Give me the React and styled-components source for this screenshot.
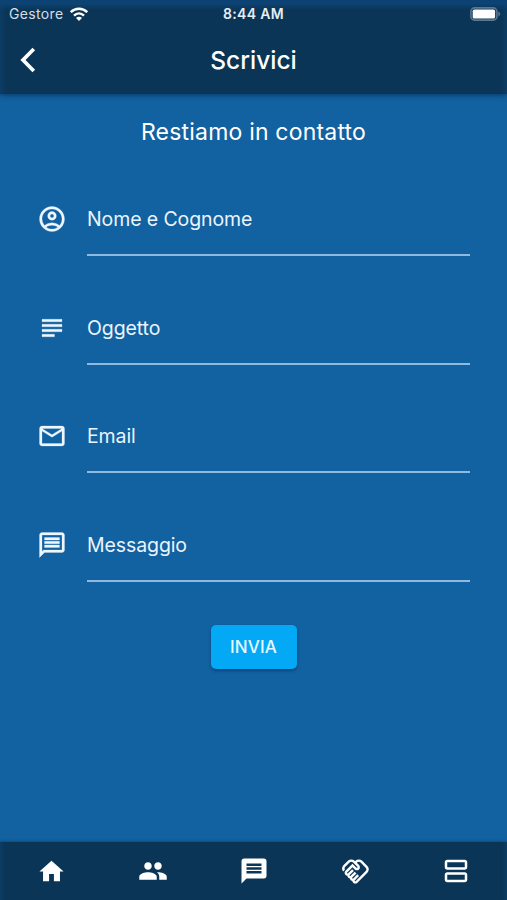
import { useState } from "react";
import styled, { createGlobalStyle } from "styled-components";
import {
  MdHome,
  MdMailOutline,
  MdMessage,
  MdOutlineAccountCircle,
  MdOutlineHandshake,
  MdOutlineMessage,
  MdOutlineViewAgenda,
  MdPeople,
  MdSubject,
} from "react-icons/md";

const fields = [
  { name: "nome", label: "Nome e Cognome", Icon: MdOutlineAccountCircle },
  { name: "oggetto", label: "Oggetto", Icon: MdSubject },
  { name: "email", label: "Email", Icon: MdMailOutline },
  { name: "messaggio", label: "Messaggio", Icon: MdOutlineMessage },
];

const tabs = [
  { name: "Home", Icon: MdHome, size: 29 },
  { name: "Persone", Icon: MdPeople, size: 30 },
  { name: "Scrivici", Icon: MdMessage, size: 30 },
  { name: "Partner", Icon: MdOutlineHandshake, size: 29 },
  { name: "Altro", Icon: MdOutlineViewAgenda, size: 30 },
];

const App = () => {
  const [values, setValues] = useState({});

  const handleChange = (e) => {
    setValues({ ...values, [e.target.name]: e.target.value });
  };

  return (
    <>
      <GlobalStyle />
      <Screen>
        <Header>
          <StatusBar>
            <Carrier>
              <CarrierName>Gestore</CarrierName>
              <svg width="18" height="14" viewBox="0 0 18 14">
                <g fill="none" stroke="#fff" strokeWidth="2.5">
                  <path d="M.8 5.2C5.4.6 12.6.6 17.2 5.2" />
                  <path d="M4 8.7c3-2.9 7-2.9 10 0" />
                </g>
                <path fill="#fff" d="M6 10.9c1.8-1.6 4.2-1.6 6 0l-3 3z" />
              </svg>
            </Carrier>
            <Clock>8:44 AM</Clock>
            <Battery>
              <svg width="31" height="14" viewBox="0 0 31 14">
                <rect x="0.9" y="0.9" width="26" height="12.2" rx="3.6" fill="none" stroke="#5c7790" strokeWidth="1.6" />
                <rect x="2.7" y="2.6" width="22.4" height="9" rx="1.6" fill="#fff" />
                <path d="M28.3 4.6c2.5.8 2.5 4 0 4.8z" fill="#5c7790" />
              </svg>
            </Battery>
          </StatusBar>
          <TitleBar>
            <BackButton aria-label="Indietro">
              <svg width="16" height="26" viewBox="0 0 16 26">
                <path d="M13.8 2 3 13l10.8 11" fill="none" stroke="#fff" strokeWidth="3.7" />
              </svg>
            </BackButton>
            <Title>Scrivici</Title>
          </TitleBar>
        </Header>
        <Form onSubmit={(e) => e.preventDefault()}>
          <FormTitle>Restiamo in contatto</FormTitle>
          {fields.map(({ name, label, Icon }) => (
            <Field key={name}>
              <Icon size={30} />
              <Input
                name={name}
                placeholder={label}
                value={values[name] || ""}
                onChange={handleChange}
              />
            </Field>
          ))}
          <SubmitButton type="submit">INVIA</SubmitButton>
        </Form>
        <TabBar>
          {tabs.map(({ name, Icon, size }) => (
            <Tab key={name} aria-label={name}>
              <Icon size={size} />
            </Tab>
          ))}
        </TabBar>
      </Screen>
    </>
  );
};

export default App;

const GlobalStyle = createGlobalStyle`
  * {
    box-sizing: border-box;
  }

  body {
    margin: 0;
    font-family: Inter, "Liberation Sans", sans-serif;
    color: #ffffff;
  }

  svg {
    display: block;
    flex-shrink: 0;
  }
`;

const Screen = styled.div`
  display: flex;
  flex-direction: column;
  width: 100%;
  height: 100vh;
  background-color: #1261a0;
  overflow: hidden;
`;

const Header = styled.header`
  height: 94px;
  flex-shrink: 0;
  background:
    linear-gradient(to bottom, #0d4374 0, #0d4374 3px, rgba(13, 67, 116, 0) 10px),
    linear-gradient(to right, #0c3d66 0, rgba(12, 61, 102, 0) 6px, rgba(12, 61, 102, 0) calc(100% - 6px), #0c3d66 100%),
    #0a3556;
  box-shadow: 0 1px 5px rgba(5, 40, 75, 0.75);
`;

const StatusBar = styled.div`
  display: grid;
  grid-template-columns: 1fr auto 1fr;
  align-items: center;
  height: 27px;
  padding: 0 6px 0 9px;
`;

const Carrier = styled.div`
  display: flex;
  align-items: center;
  gap: 6px;
`;

const CarrierName = styled.span`
  font-size: 14px;
  line-height: 16px;
  letter-spacing: 0.35px;
  color: #d5dfe8;
`;

const Clock = styled.span`
  margin-left: -3px;
  font-size: 14px;
  font-weight: 600;
  line-height: 16px;
  letter-spacing: 0.3px;
  color: #e6edf3;
`;

const Battery = styled.div`
  display: flex;
  justify-content: flex-end;
`;

const TitleBar = styled.div`
  display: grid;
  grid-template-columns: 1fr auto 1fr;
  align-items: center;
  height: 65px;
`;

const BackButton = styled.button`
  justify-self: start;
  padding: 0 0 0 19.5px;
  border: none;
  background: none;
  cursor: pointer;
`;

const Title = styled.h1`
  margin: 0;
  font-size: 24.5px;
  font-weight: 500;
`;

const Form = styled.form`
  flex: 1;
  display: flex;
  flex-direction: column;
  align-items: center;
  padding: 22px 37px 0;
`;

const FormTitle = styled.h2`
  margin: 0 0 62px;
  font-size: 23px;
  font-weight: 400;
  line-height: 32px;
  letter-spacing: 0.2px;
`;

const Field = styled.label`
  display: flex;
  align-items: flex-start;
  gap: 20px;
  width: 100%;
  height: 108.7px;
  color: #eef7ff;

  > svg {
    margin-top: -6px;
    stroke-width: 0;
  }

  /* 線を少しだけ太くする */
  > svg path:not([fill="none"]) {
    stroke-width: 0.2;
  }
`;

const Input = styled.input`
  flex: 1;
  min-width: 0;
  height: 52px;
  margin-top: -6px;
  padding: 0 0 20px;
  border: none;
  border-bottom: 2px solid #8fbae0;
  outline: none;
  background: transparent;
  color: #ffffff;
  font-family: inherit;
  font-size: 19.5px;
  letter-spacing: -0.1px;

  &::placeholder {
    color: #eaf4fd;
    opacity: 1;
  }
`;

const SubmitButton = styled.button`
  width: 86px;
  height: 44px;
  margin-top: -20px;
  border: none;
  border-radius: 5px;
  background-color: #03a9f4;
  box-shadow: 0 2px 3px rgba(0, 30, 70, 0.4);
  color: #e6f8ff;
  font-family: inherit;
  font-size: 17px;
  font-weight: 500;
  letter-spacing: 0.2px;
  cursor: pointer;
`;

const TabBar = styled.nav`
  display: flex;
  height: 58px;
  flex-shrink: 0;
  padding-left: 1px;
  background:
    linear-gradient(to right, #0c3d66 0, rgba(12, 61, 102, 0) 5px, rgba(12, 61, 102, 0) calc(100% - 5px), #0c3d66 100%),
    #0a3556;
  box-shadow: 0 0 3px rgba(5, 40, 75, 0.6);
`;

const Tab = styled.button`
  flex: 1;
  display: flex;
  align-items: center;
  justify-content: center;
  padding: 0;
  border: none;
  background: none;
  color: #ffffff;
  cursor: pointer;

  > svg {
    stroke-width: 0;
  }
`;
